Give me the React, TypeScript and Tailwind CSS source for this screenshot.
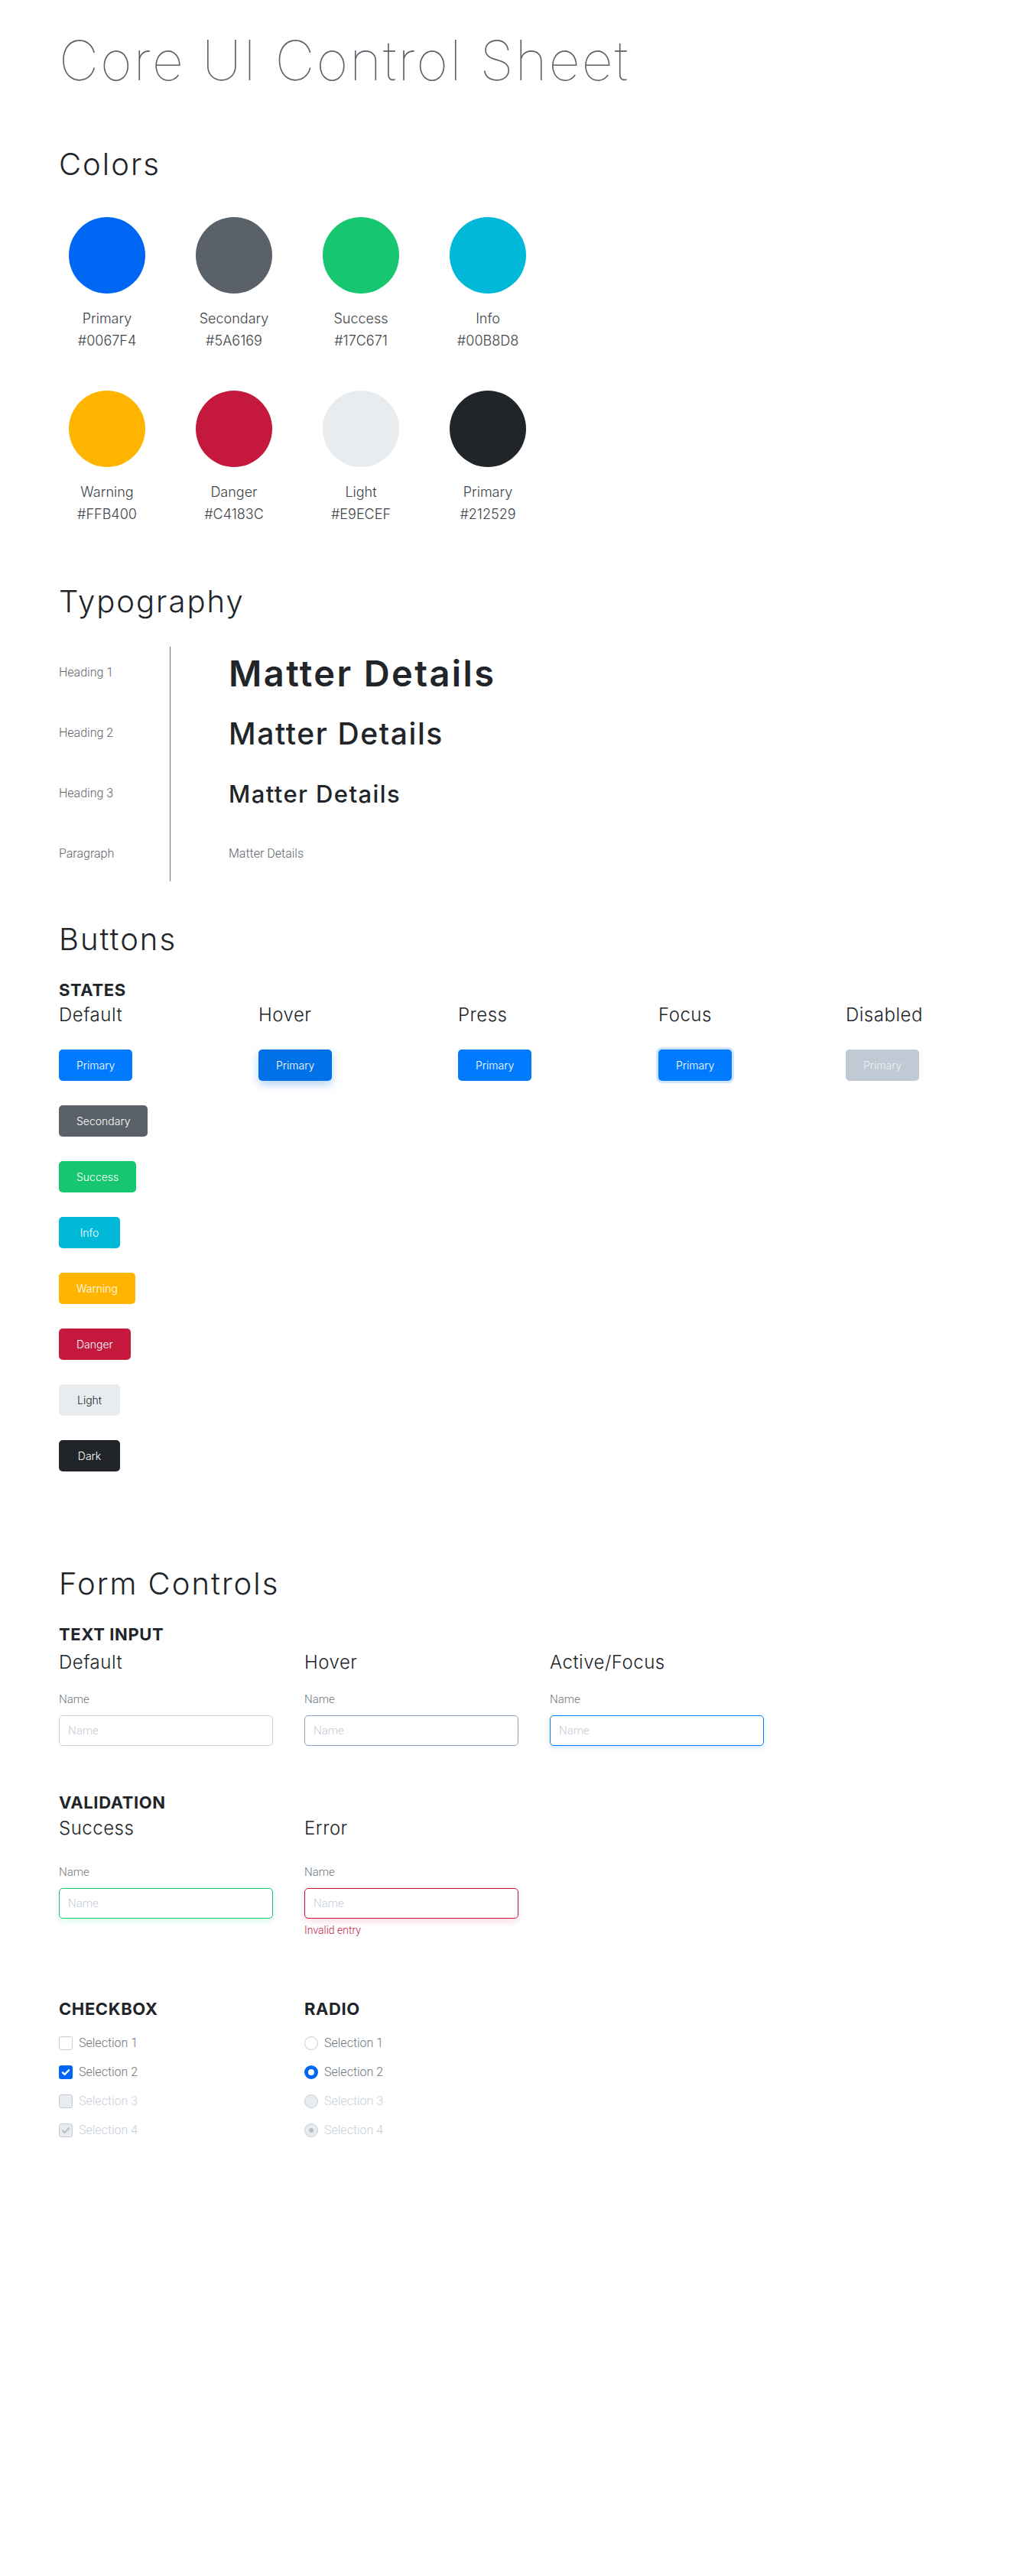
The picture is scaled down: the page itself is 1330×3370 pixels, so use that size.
import React from "react";

const colors = [
  { name: "Primary", hex: "#0067F4", cls: "bg-[#0067F4]" },
  { name: "Secondary", hex: "#5A6169", cls: "bg-[#5A6169]" },
  { name: "Success", hex: "#17C671", cls: "bg-[#17C671]" },
  { name: "Info", hex: "#00B8D8", cls: "bg-[#00B8D8]" },
  { name: "Warning", hex: "#FFB400", cls: "bg-[#FFB400]" },
  { name: "Danger", hex: "#C4183C", cls: "bg-[#C4183C]" },
  { name: "Light", hex: "#E9ECEF", cls: "bg-[#E9ECEF]" },
  { name: "Primary", hex: "#212529", cls: "bg-[#212529]" },
];

const btnBase =
  "h-[41px] min-w-[80px] px-[23px] rounded-[5px] text-[14px] font-light leading-none flex items-center justify-center";

const h2Cls = "text-[40px] font-light leading-none tracking-[2px]";
const subCls = "text-[24px] font-light leading-none tracking-[0.5px]";
const capsCls = "text-[22px] font-bold leading-none tracking-[0.6px]";

const variantButtons = [
  { label: "Primary", cls: "bg-[#007BFF] text-white" },
  { label: "Secondary", cls: "bg-[#5A6169] text-white" },
  { label: "Success", cls: "bg-[#17C671] text-white" },
  { label: "Info", cls: "bg-[#00B8D8] text-white" },
  { label: "Warning", cls: "bg-[#FFB400] text-white" },
  { label: "Danger", cls: "bg-[#C4183C] text-white" },
  { label: "Light", cls: "bg-[#E9ECEF] text-[#212529]" },
  { label: "Dark", cls: "bg-[#212529] text-white" },
];

function Field({
  label,
  inputCls,
  error,
}: {
  label: string;
  inputCls: string;
  error?: string;
}) {
  return (
    <div className="w-[280px]">
      <div className="font-['Roboto',sans-serif] font-light text-[15px] leading-none text-[#6c757d]">
        {label}
      </div>
      <input
        readOnly
        placeholder="Name"
        className={
          "mt-[13px] block w-[280px] h-10 rounded-[5px] border bg-white px-[11px] font-['Roboto',sans-serif] font-light text-[15px] outline-none placeholder:text-[#c3cbd6] " +
          inputCls
        }
      />
      {error ? (
        <div className="mt-[8px] font-['Roboto',sans-serif] font-light text-[14px] leading-none text-[#c4183c]">
          {error}
        </div>
      ) : null}
    </div>
  );
}

function CheckRow({ state, label }: { state: "off" | "on" | "dis" | "dison"; label: string }) {
  const disabled = state === "dis" || state === "dison";
  return (
    <div className="flex items-center h-[18px]">
      {state === "off" && (
        <div className="w-[18px] h-[18px] rounded-[3px] border border-[#c5ced8] bg-white" />
      )}
      {state === "on" && (
        <div className="w-[18px] h-[18px] rounded-[3px] bg-[#0067F4] flex items-center justify-center">
          <svg width="12" height="12" viewBox="0 0 12 12">
            <path d="M2 6.3l2.6 2.6L10 3.3" fill="none" stroke="white" strokeWidth="2.4" strokeLinecap="round" strokeLinejoin="round" />
          </svg>
        </div>
      )}
      {state === "dis" && (
        <div className="w-[18px] h-[18px] rounded-[3px] border border-[#c5ced8] bg-[#e9ecef]" />
      )}
      {state === "dison" && (
        <div className="w-[18px] h-[18px] rounded-[3px] border border-[#c5ced8] bg-[#e9ecef] flex items-center justify-center">
          <svg width="12" height="12" viewBox="0 0 12 12">
            <path d="M2 6.3l2.6 2.6L10 3.3" fill="none" stroke="#b3bfcc" strokeWidth="2.2" strokeLinecap="round" strokeLinejoin="round" />
          </svg>
        </div>
      )}
      <span
        className={
          "ml-[8px] font-['Roboto',sans-serif] font-light text-[16px] leading-none " +
          (disabled ? "text-[#c8d0da]" : "text-[#6c757d]")
        }
      >
        {label}
      </span>
    </div>
  );
}

function RadioRow({ state, label }: { state: "off" | "on" | "dis" | "dison"; label: string }) {
  const disabled = state === "dis" || state === "dison";
  return (
    <div className="flex items-center h-[18px]">
      {state === "off" && (
        <div className="w-[18px] h-[18px] rounded-full border border-[#c5ced8] bg-white" />
      )}
      {state === "on" && (
        <div className="w-[18px] h-[18px] rounded-full border-[5px] border-[#0067F4] bg-white" />
      )}
      {state === "dis" && (
        <div className="w-[18px] h-[18px] rounded-full border border-[#c5ced8] bg-[#e9ecef]" />
      )}
      {state === "dison" && (
        <div className="w-[18px] h-[18px] rounded-full border border-[#c5ced8] bg-[#e9ecef] flex items-center justify-center">
          <div className="w-[6px] h-[6px] rounded-full bg-[#b3bfcc]" />
        </div>
      )}
      <span
        className={
          "ml-[8px] font-['Roboto',sans-serif] font-light text-[16px] leading-none " +
          (disabled ? "text-[#c8d0da]" : "text-[#6c757d]")
        }
      >
        {label}
      </span>
    </div>
  );
}

export default function App() {
  return (
    <div className="min-h-[3370px] w-[1330px] bg-white pl-[77px] pt-[43px] font-['Inter',sans-serif] text-[#212529]">
      {/* Title */}
      <h1 className="text-[72px] font-thin leading-none text-[#5a6169] tracking-[1.9px]">
        Core UI Control Sheet
      </h1>

      {/* Colors */}
      <h2 className={"mt-[80px] " + h2Cls}>Colors</h2>
      <div className="mt-[49px] grid grid-cols-[126px_126px_126px_126px] gap-x-[40px] gap-y-[51px]">
        {colors.map((c, i) => (
          <div key={i} className="flex flex-col items-center">
            <div className={"w-[100px] h-[100px] rounded-full " + c.cls} />
            <div className="mt-[18px] text-[18px] font-light leading-[29px] text-[#3d4248] text-center">
              <div>{c.name}</div>
              <div>{c.hex}</div>
            </div>
          </div>
        ))}
      </div>

      {/* Typography */}
      <h2 className={"mt-[80px] " + h2Cls}>Typography</h2>
      <div className="mt-[39px] flex">
        <div className="w-[145px] flex flex-col pt-[6px] gap-[23px] font-['Roboto',sans-serif] font-light text-[16px] text-[#5a6169]">
          <div className="h-[56px] flex items-center">Heading 1</div>
          <div className="h-[56px] flex items-center">Heading 2</div>
          <div className="h-[56px] flex items-center">Heading 3</div>
          <div className="h-[56px] flex items-center">Paragraph</div>
        </div>
        <div className="border-l border-[#6c757d] pl-[76px] flex flex-col pt-[6px] pb-[8px] gap-[23px]">
          <div className="h-[56px] flex items-center text-[47px] font-semibold leading-none tracking-[2.4px]">Matter Details</div>
          <div className="h-[56px] flex items-center text-[39px] font-medium leading-none tracking-[1.6px]">Matter Details</div>
          <div className="h-[56px] flex items-center text-[31px] font-medium leading-none tracking-[1.4px]">Matter Details</div>
          <div className="h-[56px] flex items-center font-['Roboto',sans-serif] font-light text-[16px] text-[#5a6169]">
            Matter Details
          </div>
        </div>
      </div>

      {/* Buttons */}
      <h2 className={"mt-[56px] " + h2Cls}>Buttons</h2>
      <div className={"mt-[35px] " + capsCls}>STATES</div>
      <div className="mt-[10px] flex">
        <div className="w-[261px]">
          <div className={subCls}>Default</div>
          <div className="mt-[33px] flex flex-col items-start gap-[32px]">
            {variantButtons.map((b) => (
              <div key={b.label} className={btnBase + " " + b.cls}>
                {b.label}
              </div>
            ))}
          </div>
        </div>
        <div className="w-[261px]">
          <div className={subCls}>Hover</div>
          <div className="mt-[33px] flex">
            <div className={btnBase + " bg-[#0071E6] text-white shadow-[0_5px_12px_rgba(0,113,230,0.3)]"}>Primary</div>
          </div>
        </div>
        <div className="w-[262px]">
          <div className={subCls}>Press</div>
          <div className="mt-[33px] flex">
            <div className={btnBase + " bg-[#007BFF] text-white"}>Primary</div>
          </div>
        </div>
        <div className="w-[245px]">
          <div className={subCls}>Focus</div>
          <div className="mt-[33px] flex">
            <div className={btnBase + " bg-[#007BFF] text-white shadow-[0_0_0_3px_#cfe4ff]"}>Primary</div>
          </div>
        </div>
        <div>
          <div className={subCls}>Disabled</div>
          <div className="mt-[33px] flex">
            <div className={btnBase + " bg-[#BFCAD5] text-[#eef1f4]"}>Primary</div>
          </div>
        </div>
      </div>

      {/* Form Controls */}
      <h2 className={"mt-[127px] " + h2Cls}>Form Controls</h2>
      <div className={"mt-[35px] " + capsCls}>TEXT INPUT</div>
      <div className="mt-[14px] flex gap-[41px]">
        <div>
          <div className={subCls}>Default</div>
          <div className="mt-[29px]">
            <Field label="Name" inputCls="border-[#c8d2dc]" />
          </div>
        </div>
        <div>
          <div className={subCls}>Hover</div>
          <div className="mt-[29px]">
            <Field label="Name" inputCls="border-[#8fa1b5]" />
          </div>
        </div>
        <div>
          <div className={subCls}>Active/Focus</div>
          <div className="mt-[29px]">
            <Field label="Name" inputCls="border-[#007BFF] shadow-[0_3px_6px_rgba(0,123,255,0.15)]" />
          </div>
        </div>
      </div>

      <div className={"mt-[63px] " + capsCls}>VALIDATION</div>
      <div className="mt-[11px] flex gap-[41px]">
        <div>
          <div className={subCls}>Success</div>
          <div className="mt-[38px]">
            <Field label="Name" inputCls="border-[#17C671] shadow-[0_4px_8px_rgba(23,198,113,0.15)]" />
          </div>
        </div>
        <div>
          <div className={subCls}>Error</div>
          <div className="mt-[38px]">
            <Field
              label="Name"
              inputCls="border-[#C4183C] shadow-[0_4px_8px_rgba(196,24,60,0.15)]"
              error="Invalid entry"
            />
          </div>
        </div>
      </div>

      <div className="mt-[85px] flex gap-[41px]">
        <div className="w-[280px]">
          <div className={capsCls}>CHECKBOX</div>
          <div className="mt-[25px] flex flex-col gap-[20px]">
            <CheckRow state="off" label="Selection 1" />
            <CheckRow state="on" label="Selection 2" />
            <CheckRow state="dis" label="Selection 3" />
            <CheckRow state="dison" label="Selection 4" />
          </div>
        </div>
        <div className="w-[280px]">
          <div className={capsCls}>RADIO</div>
          <div className="mt-[25px] flex flex-col gap-[20px]">
            <RadioRow state="off" label="Selection 1" />
            <RadioRow state="on" label="Selection 2" />
            <RadioRow state="dis" label="Selection 3" />
            <RadioRow state="dison" label="Selection 4" />
          </div>
        </div>
      </div>
    </div>
  );
}
